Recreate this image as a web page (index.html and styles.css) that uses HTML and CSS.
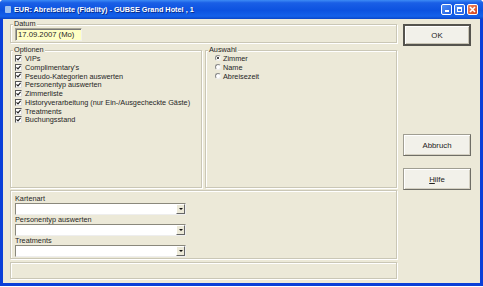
FILE: index.html
```html
<!DOCTYPE html>
<html>
<head>
  <title>EUR: Abreiseliste (Fidelity)</title>
  <link rel="stylesheet" href="styles.css">
</head>
<body>
  <div class="window">
    <div class="titlebar">
      <span class="app-icon"></span>
      <span class="title">EUR: Abreiseliste (Fidelity) - GUBSE Grand Hotel , 1</span>
      <div class="title-buttons">
        <span class="tb tb-min"><span class="min-bar"></span></span>
        <span class="tb tb-max"><span class="max-box"></span></span>
        <span class="tb tb-close">
          <svg width="7" height="7" viewBox="0 0 7 7"><path d="M1 1 L6 6 M6 1 L1 6" stroke="#fff" stroke-width="1.6"/></svg>
        </span>
      </div>
    </div>

    <div class="client">
      <div class="main-col">
        <fieldset class="group group-date">
          <legend>Datum</legend>
          <div class="date-input">17.09.2007 (Mo)</div>
        </fieldset>

        <div class="group-row">
          <fieldset class="group group-options">
            <legend>Optionen</legend>
            <div class="check-row"><span class="checkbox"><svg width="5" height="5" viewBox="0 0 5 5"><path d="M0.5 2.3 L2 3.8 L4.6 0.8" stroke="#222" stroke-width="1.2" fill="none"/></svg></span>VIPs</div>
            <div class="check-row"><span class="checkbox"><svg width="5" height="5" viewBox="0 0 5 5"><path d="M0.5 2.3 L2 3.8 L4.6 0.8" stroke="#222" stroke-width="1.2" fill="none"/></svg></span>Complimentary's</div>
            <div class="check-row"><span class="checkbox"><svg width="5" height="5" viewBox="0 0 5 5"><path d="M0.5 2.3 L2 3.8 L4.6 0.8" stroke="#222" stroke-width="1.2" fill="none"/></svg></span>Pseudo-Kategorien auswerten</div>
            <div class="check-row"><span class="checkbox"><svg width="5" height="5" viewBox="0 0 5 5"><path d="M0.5 2.3 L2 3.8 L4.6 0.8" stroke="#222" stroke-width="1.2" fill="none"/></svg></span>Personentyp auswerten</div>
            <div class="check-row"><span class="checkbox"><svg width="5" height="5" viewBox="0 0 5 5"><path d="M0.5 2.3 L2 3.8 L4.6 0.8" stroke="#222" stroke-width="1.2" fill="none"/></svg></span>Zimmerliste</div>
            <div class="check-row"><span class="checkbox"><svg width="5" height="5" viewBox="0 0 5 5"><path d="M0.5 2.3 L2 3.8 L4.6 0.8" stroke="#222" stroke-width="1.2" fill="none"/></svg></span>Historyverarbeitung (nur Ein-/Ausgecheckte Gäste)</div>
            <div class="check-row"><span class="checkbox"><svg width="5" height="5" viewBox="0 0 5 5"><path d="M0.5 2.3 L2 3.8 L4.6 0.8" stroke="#222" stroke-width="1.2" fill="none"/></svg></span>Treatments</div>
            <div class="check-row"><span class="checkbox"><svg width="5" height="5" viewBox="0 0 5 5"><path d="M0.5 2.3 L2 3.8 L4.6 0.8" stroke="#222" stroke-width="1.2" fill="none"/></svg></span>Buchungsstand</div>
          </fieldset>

          <fieldset class="group group-select">
            <legend>Auswahl</legend>
            <div class="radio-list">
              <div class="radio-row"><span class="radio checked"></span>Zimmer</div>
              <div class="radio-row"><span class="radio"></span>Name</div>
              <div class="radio-row"><span class="radio"></span>Abreisezeit</div>
            </div>
          </fieldset>
        </div>

        <div class="group group-filters">
          <div class="field-label">Kartenart</div>
          <div class="combo"><span class="combo-btn"></span></div>
          <div class="field-label">Personentyp auswerten</div>
          <div class="combo"><span class="combo-btn"></span></div>
          <div class="field-label">Treatments</div>
          <div class="combo"><span class="combo-btn"></span></div>
        </div>

        <div class="group status-box"></div>
      </div>

      <div class="button-col">
        <div class="btn btn-default">OK</div>
        <div class="btn btn-cancel">Abbruch</div>
        <div class="btn btn-help"><u>H</u>ilfe</div>
      </div>
    </div>
  </div>
</body>
</html>
```

FILE: styles.css
```css
body {
  margin: 0;
  padding: 0;
  background: #fff;
  font-family: 'Liberation Sans', Arial, sans-serif;
  font-size: 7.3px;
  color: #262626;
}

.window {
  width: 483px;
  height: 286px;
  box-sizing: border-box;
  background: #ece9d8;
  border-left: 3px solid #0a3fd8;
  border-right: 3px solid #0a3fd8;
  border-bottom: 3px solid #0a3fd8;
  border-radius: 4px 4px 0 0;
  display: flex;
  flex-direction: column;
}

/* title bar */

.titlebar {
  height: 19px;
  margin: 0 -3px;
  padding: 0 3px 0 5px;
  display: flex;
  align-items: center;
  gap: 3px;
  border-radius: 4px 4px 0 0;
  background: linear-gradient(#3d8bf5 0%, #1a5fe6 15%, #0c52e0 55%, #1461ea 85%, #0a46c8 100%);
}

.app-icon {
  width: 6px;
  height: 7px;
  background: #9cc0f0;
  border-radius: 1px;
}

.title {
  flex: 1;
  color: #fff;
  font-weight: bold;
  font-size: 7.3px;
  text-shadow: 1px 1px 0 #0a2e8a;
}

.title-buttons {
  display: flex;
  gap: 2px;
  margin-right: 2px;
}

.tb {
  width: 11px;
  height: 11px;
  box-sizing: border-box;
  border: 1px solid #fff;
  border-radius: 2px;
  background: linear-gradient(135deg, #4f8ef5, #2260e2);
  display: flex;
  align-items: center;
  justify-content: center;
}

.tb-min {
  align-items: flex-end;
  padding-bottom: 2px;
}

.min-bar {
  width: 4px;
  height: 2px;
  background: #fff;
}

.max-box {
  width: 5px;
  height: 5px;
  box-sizing: border-box;
  border: 1px solid #fff;
  border-top-width: 2px;
}

.tb-close {
  background: linear-gradient(135deg, #f0875e, #d4411a);
}

/* client area */

.client {
  flex: 1;
  display: flex;
  gap: 6px;
  padding: 1px 0 0 7px;
}

.main-col {
  width: 387px;
  display: flex;
  flex-direction: column;
}

.group {
  margin: 0;
  border: 1px solid #cac7b6;
  box-shadow: 1px 1px 0 #fff, inset 1px 1px 0 #fff;
}

fieldset.group {
  padding: 0 4px 1px 4px;
}

.group legend {
  padding: 0 1px;
  margin-left: -2px;
  line-height: 8px;
  background: #ece9d8;
}

.date-input {
  width: 67px;
  height: 13px;
  box-sizing: border-box;
  padding: 0 2px;
  font-size: 7.7px;
  line-height: 12px;
  background: #ffffc4;
  border: 1px solid #a9a797;
  border-right-color: #f2f1ea;
  border-bottom-color: #f2f1ea;
  box-shadow: inset 1px 1px 0 #777;
}

.group-row {
  display: flex;
  gap: 3px;
  margin-top: 3px;
}

.group-options,
.group-select {
  width: 192px;
  height: 142px;
  box-sizing: border-box;
}

.check-row,
.radio-row {
  display: flex;
  align-items: center;
  gap: 3px;
  height: 8.8px;
}

.checkbox {
  width: 7px;
  height: 7px;
  box-sizing: border-box;
  border: 1px solid #555;
  border-right-color: #ddd;
  border-bottom-color: #ddd;
  background: #fff;
  display: flex;
  align-items: center;
  justify-content: center;
}

.checkbox svg {
  display: block;
}

.radio-list {
  padding-left: 5px;
}

.radio-row {
  gap: 2px;
}

.radio {
  width: 6px;
  height: 6px;
  box-sizing: border-box;
  border-radius: 50%;
  border: 1px solid #888;
  border-right-color: #eee;
  border-bottom-color: #eee;
  background: #fff;
  display: flex;
  align-items: center;
  justify-content: center;
}

.radio.checked::after {
  content: "";
  width: 2px;
  height: 2px;
  background: #111;
  border-radius: 50%;
}

.group-filters {
  margin-top: 2px;
  height: 69px;
  box-sizing: border-box;
  padding: 3px 4px 0 4px;
}

.field-label {
  line-height: 8px;
  height: 8px;
  margin-top: 1px;
}

.combo {
  width: 171px;
  height: 12px;
  box-sizing: border-box;
  background: #fff;
  border: 1px solid #8a887c;
  border-right-color: #eee;
  border-bottom-color: #eee;
  display: flex;
  justify-content: flex-end;
  margin-bottom: 1px;
}

.combo-btn {
  width: 9px;
  box-sizing: border-box;
  background: #ece9d8;
  border: 1px solid #fff;
  border-right-color: #666;
  border-bottom-color: #666;
  display: flex;
  align-items: center;
  justify-content: center;
}

.combo-btn::after {
  content: "";
  border-left: 2px solid transparent;
  border-right: 2px solid transparent;
  border-top: 2px solid #111;
}

.status-box {
  margin-top: 3px;
  height: 17px;
  box-sizing: border-box;
}

/* buttons */

.button-col {
  width: 68px;
  display: flex;
  flex-direction: column;
}

.btn {
  height: 22px;
  box-sizing: border-box;
  display: flex;
  align-items: center;
  justify-content: center;
  font-size: 7.8px;
  background: #f2f1ea;
  border: 1px solid #a09e92;
  border-right-color: #6f6e66;
  border-bottom-color: #6f6e66;
  box-shadow: inset 1px 1px 0 #fff, inset -1px -1px 0 #d4d0c2;
  color: #222;
}

.btn-default {
  margin-top: 4px;
  border: 2px solid #55544e;
  box-shadow: inset 1px 1px 0 #fff, inset -1px -1px 0 #c8c4b4;
}

.btn-cancel {
  margin-top: 88px;
}

.btn-help {
  margin-top: 12px;
}
```
